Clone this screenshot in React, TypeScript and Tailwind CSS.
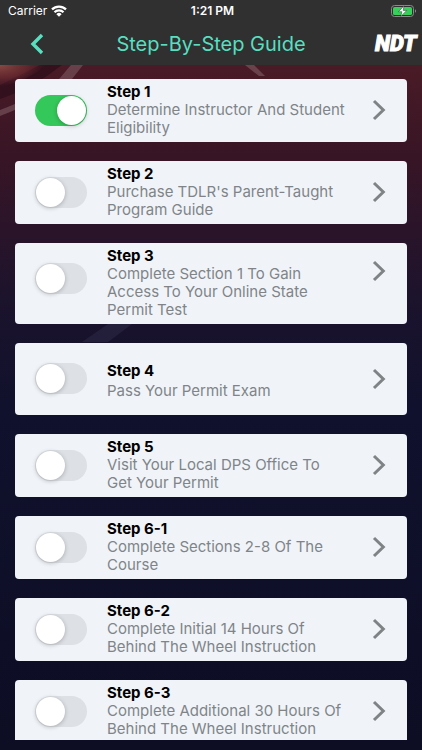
import React, { useState } from "react";

interface Step {
  id: string;
  title: string;
  description: string;
  done: boolean;
}

const STEPS: Step[] = [
  { id: "1", title: "Step 1", description: "Determine Instructor And Student Eligibility", done: true },
  { id: "2", title: "Step 2", description: "Purchase TDLR's Parent-Taught Program Guide", done: false },
  { id: "3", title: "Step 3", description: "Complete Section 1 To Gain Access To Your Online State Permit Test", done: false },
  { id: "4", title: "Step 4", description: "Pass Your Permit Exam", done: false },
  { id: "5", title: "Step 5", description: "Visit Your Local DPS Office To Get Your Permit", done: false },
  { id: "6-1", title: "Step 6-1", description: "Complete Sections 2-8 Of The Course", done: false },
  { id: "6-2", title: "Step 6-2", description: "Complete Initial 14 Hours Of Behind The Wheel Instruction", done: false },
  { id: "6-3", title: "Step 6-3", description: "Complete Additional 30 Hours Of Behind The Wheel Instruction", done: false },
];

const StatusBar: React.FC = () => (
  <div className="grid h-[22px] grid-cols-3 items-center pr-[5px] pl-2 text-xs text-white">
    <div className="flex items-center gap-1">
      <span>Carrier</span>
      <svg viewBox="0 0 16 12" className="h-3 w-4" fill="none" stroke="currentColor" strokeWidth="2.2">
        <path d="M1 4.4a10 10 0 0 1 14 0" />
        <path d="M3.5 7.2a6.3 6.3 0 0 1 9 0" />
        <path d="M8 11.8 5.4 9.2a3.6 3.6 0 0 1 5.2 0z" fill="currentColor" stroke="none" />
      </svg>
    </div>
    <span className="text-center font-semibold">1:21 PM</span>
    <svg viewBox="0 0 26 12" className="h-3 w-[26px] justify-self-end">
      <rect x="0.5" y="0.5" width="22" height="11" rx="3" fill="none" stroke="#8a8a8a" />
      <rect x="2" y="2" width="19" height="8" rx="1.6" fill="#35d158" />
      <path d="M24 4.2v3.6c1.4-.6 1.4-3 0-3.6z" fill="#8a8a8a" />
      <path d="M13 .8 7.4 6.7h3.5L9.8 11.4l6-6h-3.6z" fill="#fff" stroke="#303030" strokeWidth=".5" />
    </svg>
  </div>
);

const Logo: React.FC = () => (
  <svg viewBox="0 0 46 32" className="h-8 w-[46px]" role="img" aria-label="NDT">
    <text
      x="1"
      y="23"
      fontFamily="Roboto, 'Liberation Sans', sans-serif"
      fontSize="22"
      fontWeight="900"
      fontStyle="italic"
      fill="#fff"
      stroke="#fff"
      strokeWidth="1"
    >
      NDT
    </text>
  </svg>
);

// Running track fading into the night blue
const Backdrop: React.FC = () => (
  <svg
    className="absolute inset-0 h-full w-full"
    viewBox="0 0 422 685"
    preserveAspectRatio="none"
    aria-hidden="true"
  >
    <defs>
      <linearGradient id="sky" x1="0" y1="0" x2="0" y2="1">
        <stop offset="0" stopColor="#4a1b27" />
        <stop offset="0.13" stopColor="#381525" />
        <stop offset="0.25" stopColor="#29142a" />
        <stop offset="0.34" stopColor="#1c132c" />
        <stop offset="0.5" stopColor="#10112d" />
        <stop offset="1" stopColor="#0d0d24" />
      </linearGradient>
      <radialGradient id="glow" cx="0" cy="0" r="1">
        <stop offset="0" stopColor="#8a4a43" />
        <stop offset="0.6" stopColor="#6b2b30" stopOpacity="0.7" />
        <stop offset="1" stopColor="#4a1b27" stopOpacity="0" />
      </radialGradient>
    </defs>
    <rect width="422" height="685" fill="url(#sky)" />
    <path d="M0 34 Q32 24 62 0H40L0 20z" fill="#2c0d19" opacity="0.7" />
    <path d="M0 0H46Q28 16 0 22z" fill="url(#glow)" />
    <path d="M71 0H83L72 14Q44 34 0 51V45Q40 30 60 13z" fill="#75505a" opacity="0.7" />
    <path d="M245 0h9l11 11h-6z" fill="#75505a" opacity="0.75" />
    <path d="M82 277 108 259h24l-24 18z" fill="#27233f" opacity="0.8" />
  </svg>
);

interface StepCardProps {
  step: Step;
  onToggle: (id: string) => void;
}

const StepCard: React.FC<StepCardProps> = ({ step, onToggle }) => {
  const isShort = step.description.length < 25;
  const isLong = step.description.length > 62;

  return (
    <li
      className={`flex shrink-0 items-center rounded bg-[#f0f4f8] pt-1 pr-4 pb-[5px] pl-5 ${
        isShort ? "min-h-[72px]" : ""
      }`}
    >
      <label
        className={`relative block h-[31px] w-[52px] shrink-0 cursor-pointer ${isLong ? "mt-4 self-start" : ""}`}
      >
        <input
          type="checkbox"
          role="switch"
          aria-label={step.title}
          className="peer sr-only"
          checked={step.done}
          onChange={() => onToggle(step.id)}
        />
        <span className="block h-full rounded-full bg-[#dde0e5] transition-colors peer-checked:bg-[#34c759]" />
        <span className="absolute top-px left-px size-[29px] rounded-full bg-white shadow-[0_1px_4px_rgba(0,0,0,0.25)] transition-transform peer-checked:translate-x-[21px]" />
      </label>
      <div className={`ml-5 min-w-0 flex-1 text-[15px] leading-[18px] ${isShort ? "pt-1" : ""}`}>
        <h2 className="font-bold text-black">{step.title}</h2>
        <p className={`text-[#808489] ${isShort ? "mt-[2px]" : ""}`}>{step.description}</p>
      </div>
      <button
        type="button"
        aria-label={`Open ${step.title}`}
        className={`ml-5 shrink-0 cursor-pointer text-[#808386] ${isLong ? "mt-3 self-start" : ""}`}
      >
        <svg viewBox="0 0 24 24" className="size-6" fill="none" stroke="currentColor" strokeWidth="3">
          <path d="M7 3 16.3 12 7 21" />
        </svg>
      </button>
    </li>
  );
};

export default function App() {
  const [steps, setSteps] = useState(STEPS);

  const toggle = (id: string) =>
    setSteps((prev) => prev.map((s) => (s.id === id ? { ...s, done: !s.done } : s)));

  return (
    <div className="flex h-screen flex-col bg-[#0d0d24] font-[Inter,'Liberation_Sans',sans-serif]">
      <header className="bg-[#303030]">
        <StatusBar />
        <div className="grid h-[43px] grid-cols-[1fr_auto_1fr] items-center px-[2px]">
          <button
            type="button"
            aria-label="Back"
            className="ml-5 cursor-pointer justify-self-start text-[#57dfc0]"
          >
            <svg viewBox="0 0 24 24" className="size-6" fill="none" stroke="currentColor" strokeWidth="3.4">
              <path d="M20 3 11 12 20 21" />
            </svg>
          </button>
          <h1 className="text-xl text-[#57dfc0]">Step-By-Step Guide</h1>
          <div className="justify-self-end">
            <Logo />
          </div>
        </div>
      </header>
      <main className="relative min-h-0 flex-1 pb-[10px]">
        <Backdrop />
        <ul className="relative flex h-full flex-col gap-[19px] overflow-y-auto px-[15px] pt-[14px] [scrollbar-width:none]">
          {steps.map((step) => (
            <StepCard key={step.id} step={step} onToggle={toggle} />
          ))}
        </ul>
      </main>
    </div>
  );
}
